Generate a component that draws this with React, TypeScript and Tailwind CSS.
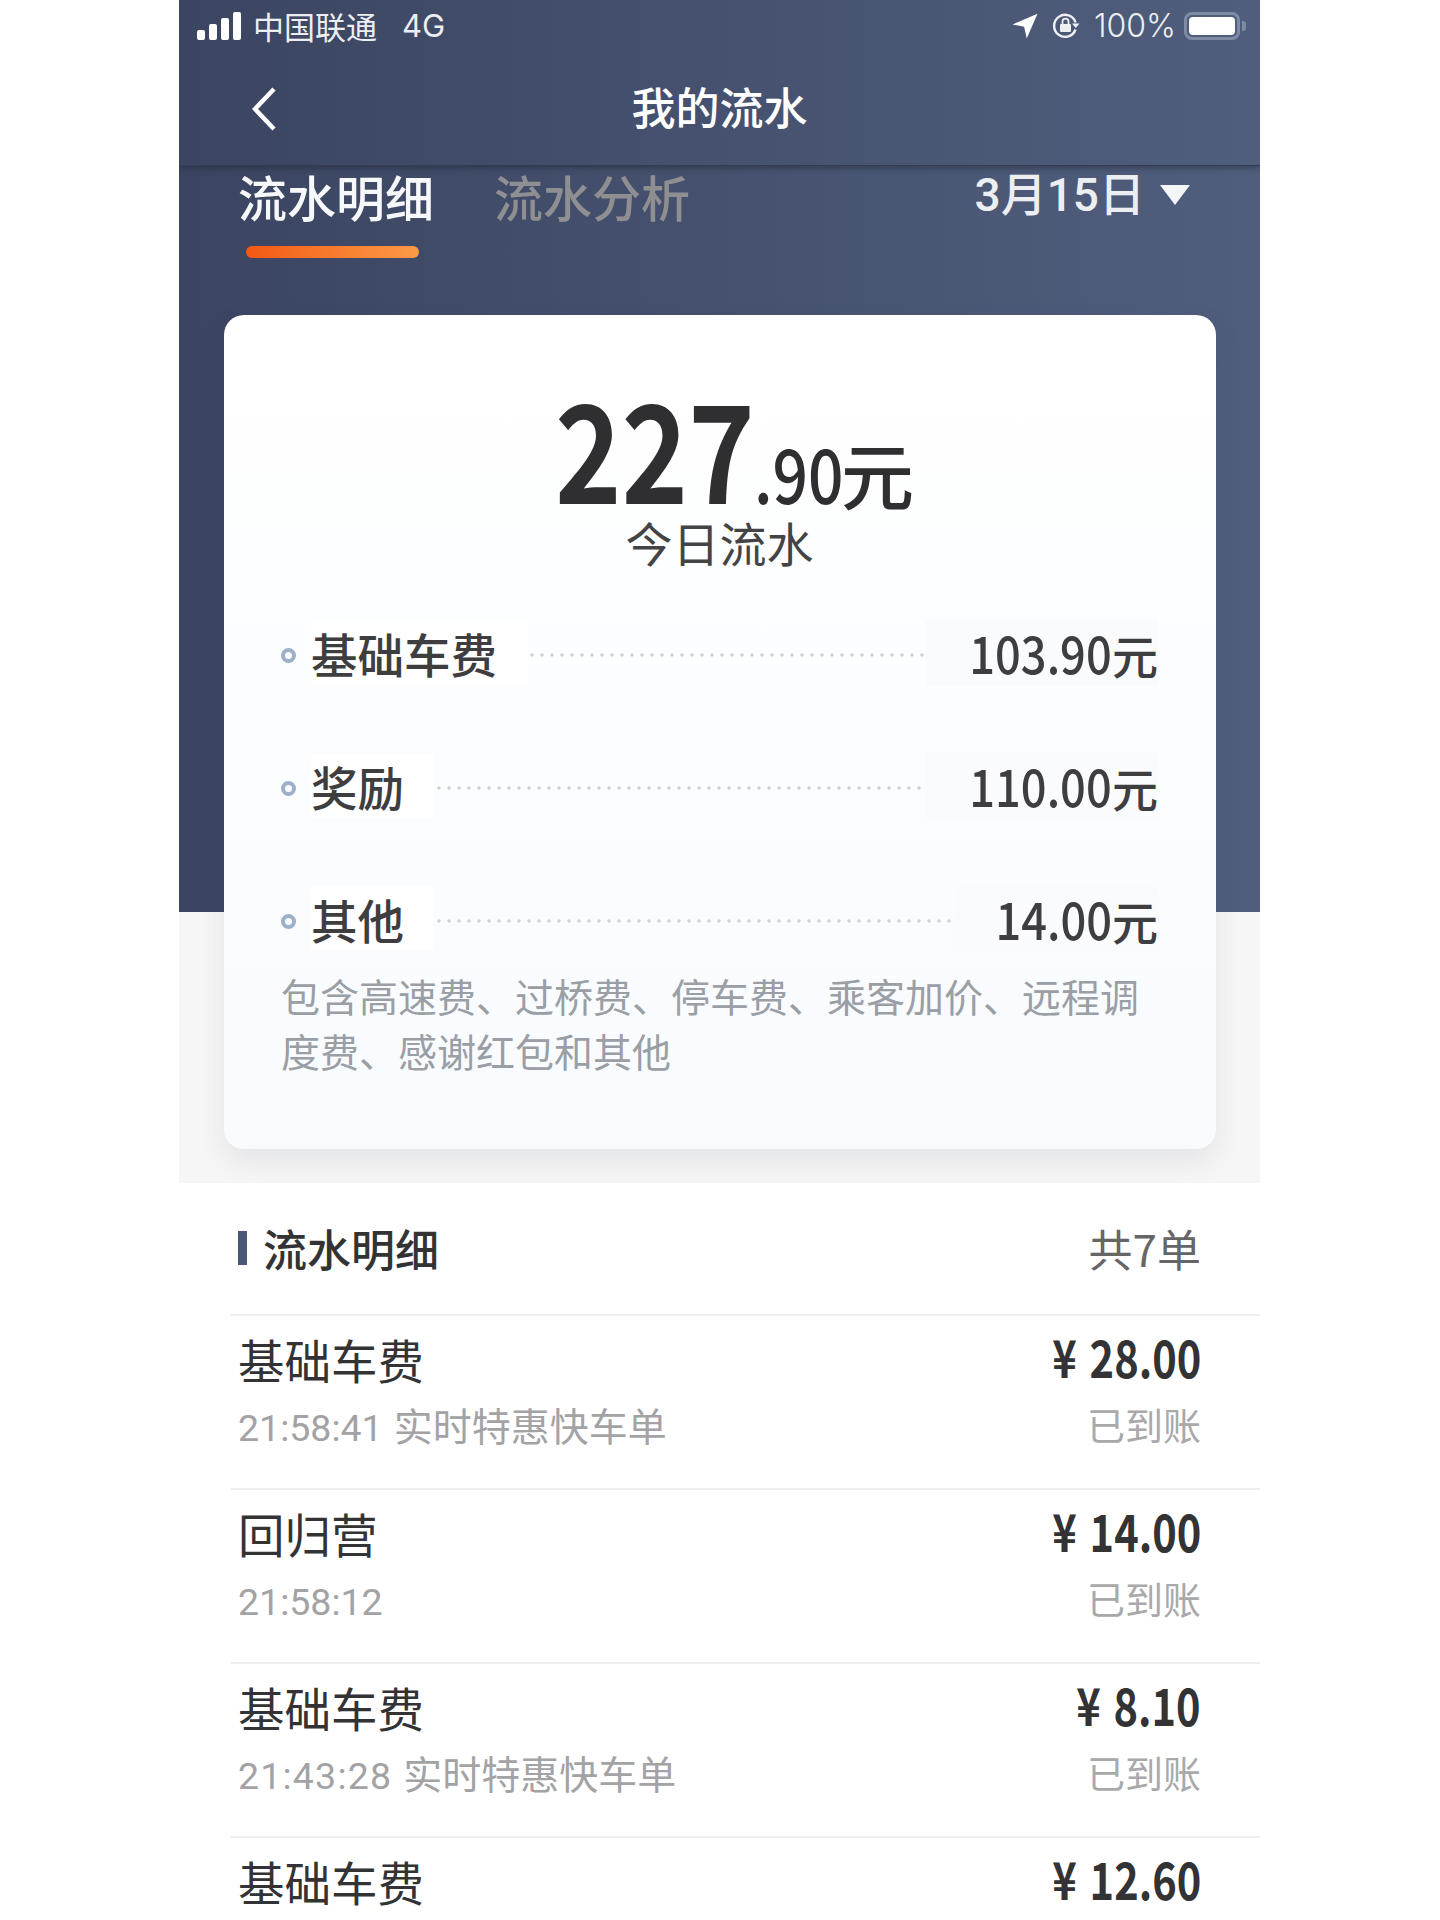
const breakdown = [
  { label: "基础车费", value: "103.90" },
  { label: "奖励", value: "110.00" },
  { label: "其他", value: "14.00" },
];

const orders = [
  { title: "基础车费", time: "21:58:41", tag: "实时特惠快车单", amount: "28.00", status: "已到账", timeClass: "" },
  { title: "回归营", time: "21:58:12", tag: "", amount: "14.00", status: "已到账", timeClass: "" },
  { title: "基础车费", time: "21:43:28", tag: "实时特惠快车单", amount: "8.10", status: "已到账", timeClass: "tracking-[1.2px]" },
  { title: "基础车费", time: "", tag: "", amount: "12.60", status: "", timeClass: "" },
];

const StatusBar = () => (
  <div className="flex h-[52px] items-center justify-between pl-[18px] pr-[14px] text-white">
    <div className="flex items-center">
      <div className="flex h-[28px] items-end gap-[4px]">
        <span className="h-[10px] w-[8px] rounded-[2px] bg-white" />
        <span className="h-[16px] w-[8px] rounded-[2px] bg-white" />
        <span className="h-[22px] w-[8px] rounded-[2px] bg-white" />
        <span className="h-[28px] w-[8px] rounded-[2px] bg-white" />
      </div>
      <span className="ml-[12px] text-[31px] leading-[40px] text-[#eceef2]">中国联通</span>
      <span className="ml-[25px] text-[31px] leading-[40px] text-[#eceef2] [font-family:Inter,sans-serif]">4G</span>
    </div>
    <div className="flex items-center">
      <svg width="26" height="26" viewBox="0 0 24 24" fill="#ffffff">
        <path d="M23.5 .8 L0.5 10.5 L11.2 12.8 L13.6 23.5 Z" />
      </svg>
      <svg className="ml-[14px]" width="28" height="26" viewBox="0 0 28 26" fill="none">
        <path d="M23.5 16.5 A11 11 0 1 1 23.6 9.5" stroke="#eef0f4" strokeWidth="2.4" />
        <path d="M20 10.5 L27.5 10.5 L23.8 15 Z" fill="#eef0f4" />
        <rect x="8" y="11" width="11" height="8" rx="1.2" fill="#eef0f4" />
        <path d="M10.5 11 V8.6 a3 3 0 0 1 6 0 V11" stroke="#eef0f4" strokeWidth="1.8" />
      </svg>
      <span className="ml-[14px] text-[32px] leading-[40px] font-light text-[#eceef2] [font-family:Inter,sans-serif]">100%</span>
      <div className="ml-[8px] flex h-[28px] w-[56px] items-center justify-center rounded-[8px] border-[3px] border-[#7f8aa3]">
        <span className="h-[18px] w-[46px] rounded-[4px] bg-white" />
      </div>
      <span className="ml-[2px] h-[10px] w-[4px] rounded-r-[3px] bg-[#7f8aa3]" />
    </div>
  </div>
);

const Header = () => (
  <div className="relative z-20 h-[166px] border-b border-[#333c54] bg-gradient-to-r from-[#3b4561] to-[#505e7d] shadow-[0_2px_6px_rgba(25,30,45,0.45)]">
    <StatusBar />
    <div className="grid h-[114px] grid-cols-[1fr_auto_1fr] items-center pb-[6px]">
      <div className="pl-[73px] pt-[6px]">
        <svg width="24" height="44" viewBox="0 0 24 44" fill="none">
          <path d="M22 2 L3 22 L22 42" stroke="#ffffff" strokeWidth="4.5" />
        </svg>
      </div>
      <h1 className="text-[44px] leading-[56px] font-medium text-white">我的流水</h1>
    </div>
  </div>
);

const Tabs = () => (
  <div className="pl-[59px] pr-[70px]">
    <div className="flex h-[64px] items-center justify-between">
      <div className="mb-[4px] flex gap-[60px] text-[49px] leading-[64px] font-medium">
        <span className="text-[#f7f8fa]">流水明细</span>
        <span className="text-[#8f8f92]">流水分析</span>
      </div>
      <div className="mb-[6px] flex items-center text-[#eceef2]">
        <span className="text-[46px] leading-[56px] font-medium [font-family:Roboto,'Noto_Sans_CJK_SC',sans-serif]">3月15日</span>
        <svg className="ml-[15px]" width="30" height="20" viewBox="0 0 30 20" fill="#f4f5f7">
          <path d="M0 0 H30 L15 20 Z" />
        </svg>
      </div>
    </div>
    <div className="ml-[8px] mt-[16px] h-[12px] w-[173px] rounded-[6px] bg-gradient-to-r from-[#f4570f] to-[#fb9a45]" />
  </div>
);

const SummaryCard = () => (
  <div className="relative z-10 ml-[45px] mt-[57px] h-[834px] w-[992px] rounded-[20px] bg-gradient-to-b from-white to-[#f8fbfe] pl-[57px] pr-[58px] pt-[62px] shadow-[0_12px_28px_rgba(60,70,90,0.1)]">
    <div className="flex h-[145px] items-baseline justify-center pl-[30px] leading-none text-[#2f2f31]">
      {/* digits in the reference are a narrow DIN, no such font here so squeeze them */}
      <span className="w-[195px] whitespace-nowrap text-[136px] font-bold inline-block origin-left scale-x-[0.83]">227</span>
      <span className="ml-[4px] w-[87px] whitespace-nowrap text-[75px] font-medium inline-block origin-left scale-x-[0.83]">.90</span>
      <span className="text-[73px] font-medium">元</span>
    </div>
    <div className="h-[40px] text-center text-[47px] leading-[40px] text-[#444446]">今日流水</div>

    <div className="mt-[61px] flex flex-col gap-[69px]">
      {breakdown.map((row) => (
        <div key={row.label} className="flex h-[64px] items-center">
          <span className="h-[15px] w-[15px] shrink-0 rounded-full border-[4px] border-[#9db0c9]" />
          <span className="mb-[5px] ml-[15px] bg-white pr-[30px] text-[46.5px] leading-[64px] font-medium text-[#3e3e40]">{row.label}</span>
          <span className="h-[4px] flex-1 bg-[radial-gradient(circle,#cdd1d7_1.5px,transparent_1.7px)] bg-[length:10px_4px]" />
          <span className="mb-[5px] flex items-baseline bg-[#f9fbfd] pl-[22px] text-[46px] leading-[64px] font-medium text-[#3e3e40]">
            <span className="inline-block origin-right scale-x-[0.87] text-[52px]">{row.value}</span>
            <span>元</span>
          </span>
        </div>
      ))}
    </div>

    <p className="mt-[15px] text-[39px] leading-[55px] text-[#9a9ea5]">
      包含高速费、过桥费、停车费、乘客加价、远程调度费、感谢红包和其他
    </p>
  </div>
);

type Order = (typeof orders)[number];

const OrderRow = ({ order }: { order: Order }) => (
  <div className="ml-[52px] flex h-[174px] justify-between border-t-2 border-[#eeeeee] pl-[7px] pr-[59px]">
    <div>
      <div className="mt-[15px] text-[46.5px] leading-[56px] text-[#333335]">{order.title}</div>
      <div className="mt-[12px] flex items-baseline text-[39px] leading-[50px] text-[#a3a3a5]">
        <span className={`text-[37.5px] [font-family:Roboto,sans-serif] ${order.timeClass}`}>{order.time}</span>
        <span className="ml-[11px]">{order.tag || "\u00a0"}</span>
      </div>
    </div>
    <div className="text-right">
      <div className="mt-[12px] h-[56px]">
        <span className="inline-block origin-right scale-x-[0.8] whitespace-nowrap text-[52px] leading-[56px] font-bold text-[#333335]">
          <span className="mr-[16px]">¥</span>
          {order.amount}
        </span>
      </div>
      <div className="mt-[15px] text-[38px] leading-[50px] text-[#a9a9ab]">{order.status}</div>
    </div>
  </div>
);

const App = () => {
  return (
    <div className="h-[1920px] overflow-hidden bg-white [font-family:'Noto_Sans_CJK_SC',sans-serif]">
      <div className="ml-[179px] w-[1081px] overflow-hidden">
        <Header />
        <div className="h-[746px] bg-gradient-to-r from-[#3b4561] to-[#505e7d]">
          <Tabs />
          <SummaryCard />
        </div>
        <div className="h-[271px] bg-[#f6f6f6]" />

        <div className="flex h-[131px] items-center justify-between pb-[2px] pl-[59px] pr-[59px]">
          <div className="flex items-center">
            <span className="h-[34px] w-[9px] bg-[#4a5876]" />
            <span className="ml-[16px] text-[44px] leading-[56px] font-medium text-[#333335]">流水明细</span>
          </div>
          <span className="text-[44px] leading-[56px] text-[#666668]">共7单</span>
        </div>

        {orders.map((o, i) => (
          <OrderRow key={i} order={o} />
        ))}
      </div>
    </div>
  );
};

export default App;
